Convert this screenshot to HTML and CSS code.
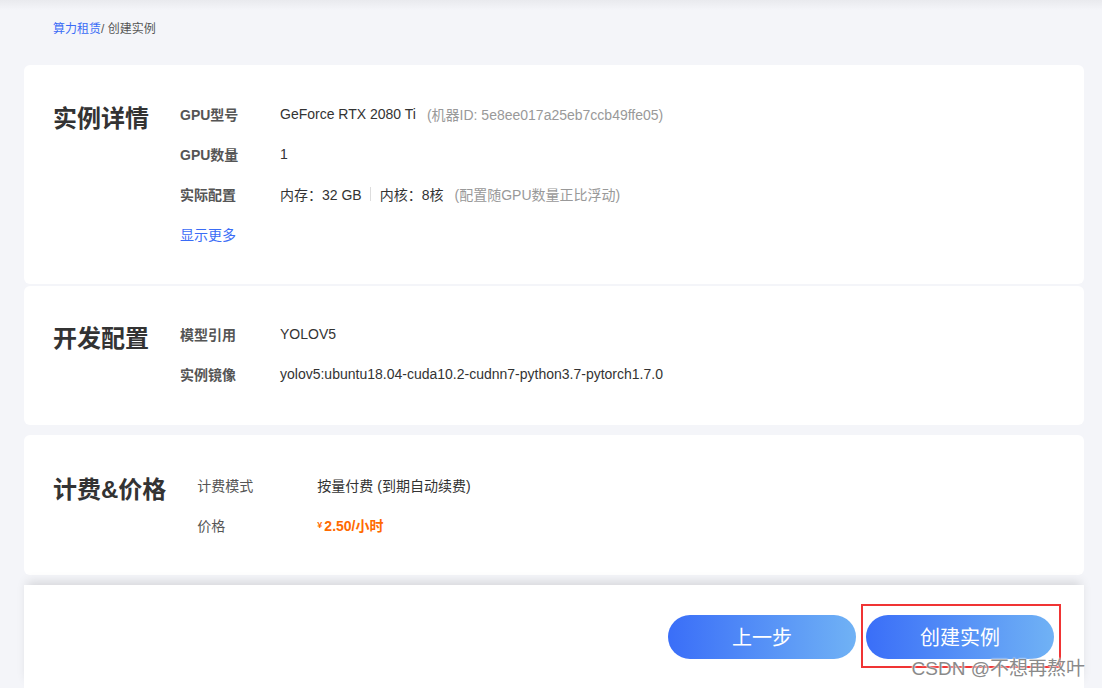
FILE: index.html
```html
<!DOCTYPE html>
<html lang="zh-CN">
<head>
<meta charset="utf-8">
<title>创建实例</title>
<link rel="stylesheet" href="styles.css">
</head>
<body>
<div class="page">
  <div class="breadcrumb"><a class="crumb-link">算力租赁</a><span class="crumb-current">/ 创建实例</span></div>

  <section class="card card-first">
    <h2 class="card-title">实例详情</h2>
    <div class="rows">
      <div class="row"><span class="label bold">GPU型号</span><span class="value">GeForce RTX 2080 Ti<span class="note">(机器ID: 5e8ee017a25eb7ccb49ffe05)</span></span></div>
      <div class="row"><span class="label bold">GPU数量</span><span class="value">1</span></div>
      <div class="row"><span class="label bold">实际配置</span><span class="value">内存：32 GB<span class="sep"></span>内核：8核<span class="note">(配置随GPU数量正比浮动)</span></span></div>
      <div class="row"><a class="more-link">显示更多</a></div>
    </div>
  </section>

  <section class="card card-second">
    <h2 class="card-title">开发配置</h2>
    <div class="rows">
      <div class="row"><span class="label bold">模型引用</span><span class="value">YOLOV5</span></div>
      <div class="row"><span class="label bold">实例镜像</span><span class="value">yolov5:ubuntu18.04-cuda10.2-cudnn7-python3.7-pytorch1.7.0</span></div>
    </div>
  </section>

  <section class="card card-third">
    <h2 class="card-title">计费&amp;价格</h2>
    <div class="rows">
      <div class="row"><span class="label wide">计费模式</span><span class="value">按量付费 (到期自动续费)</span></div>
      <div class="row"><span class="label wide">价格</span><span class="price"><span class="yen">¥</span>2.50/小时</span></div>
    </div>
  </section>

  <footer class="footer">
    <button class="btn">上一步</button>
    <div class="btn-wrap">
      <button class="btn">创建实例</button>
      <span class="highlight"></span>
    </div>
    <span class="watermark">CSDN @不想再熬叶</span>
  </footer>
</div>
</body>
</html>
```

FILE: styles.css
```css
* { box-sizing: border-box; }
html, body { margin: 0; padding: 0; }
body {
  background: #f4f5f9;
  font-family: "Liberation Sans", "Noto Sans CJK SC", sans-serif;
  color: #333;
  overflow: hidden;
}
.page {
  position: relative;
  padding: 0 18px 0 24px;
  height: 688px;
  background: linear-gradient(to bottom, #e9eaee 0, #f4f5f9 10px);
}
.breadcrumb {
  padding: 21px 0 0 29px;
  height: 65px;
  font-size: 12px;
  line-height: 17px;
}
.crumb-link { color: #3a6cf6; }
.crumb-current { color: #555; }

.card {
  display: flex;
  align-items: flex-start;
  background: #fff;
  border-radius: 6px;
  padding: 29px 20px 30px 29px;
}
.card-second { margin-top: 2px; padding-top: 28px; padding-bottom: 31px; }
.card-third { margin-top: 10px; padding-top: 30px; }

.card-title {
  margin: 9px 31px 0 0;
  font-size: 24px;
  line-height: 32px;
  font-weight: bold;
  color: #333;
}
.rows { display: flex; flex-direction: column; }
.row {
  display: flex;
  align-items: center;
  height: 40px;
  font-size: 14px;
}
.label { width: 100px; color: #555; }
.label.bold { font-weight: bold; }
.label.wide { width: 120px; color: #555; }
.value { color: #333; display: flex; align-items: center; }
.note { color: #999; margin-left: 11px; }
.sep {
  display: inline-block;
  width: 1px;
  height: 14px;
  background: #ddd;
  margin: 0 9px 0 8px;
}
.more-link { color: #3a6cf6; }
.price { color: #ff6a00; font-weight: bold; display: flex; align-items: baseline; }
.yen { font-size: 9px; margin-right: 2px; position: relative; top: -3px; }

.footer {
  position: relative;
  margin-top: 10px;
  background: #fff;
  display: flex;
  justify-content: flex-end;
  gap: 10px;
  padding: 30px 30px 29px 0;
  box-shadow: 0 -6px 10px -3px rgba(0, 0, 0, 0.13);
}
.btn {
  width: 188px;
  height: 44px;
  border: none;
  border-radius: 22px;
  background: linear-gradient(to right, #3a6ef8, #70b2f5);
  color: #fff;
  font-family: "Noto Sans CJK SC", sans-serif;
  font-size: 20px;
  line-height: 44px;
  padding: 0;
}
.btn-wrap { position: relative; display: flex; }
.highlight {
  position: absolute;
  left: -5px;
  right: -7px;
  top: -11px;
  bottom: -9px;
  border: 2px solid #f03434;
}
.watermark {
  position: absolute;
  right: -1px;
  top: 68px;
  font-family: "Liberation Sans", "Noto Sans CJK SC", sans-serif;
  font-size: 19px;
  color: #8a8a8a;
  text-shadow: 0 0 2px #fff, 0 0 2px #fff;
  white-space: nowrap;
}
```
